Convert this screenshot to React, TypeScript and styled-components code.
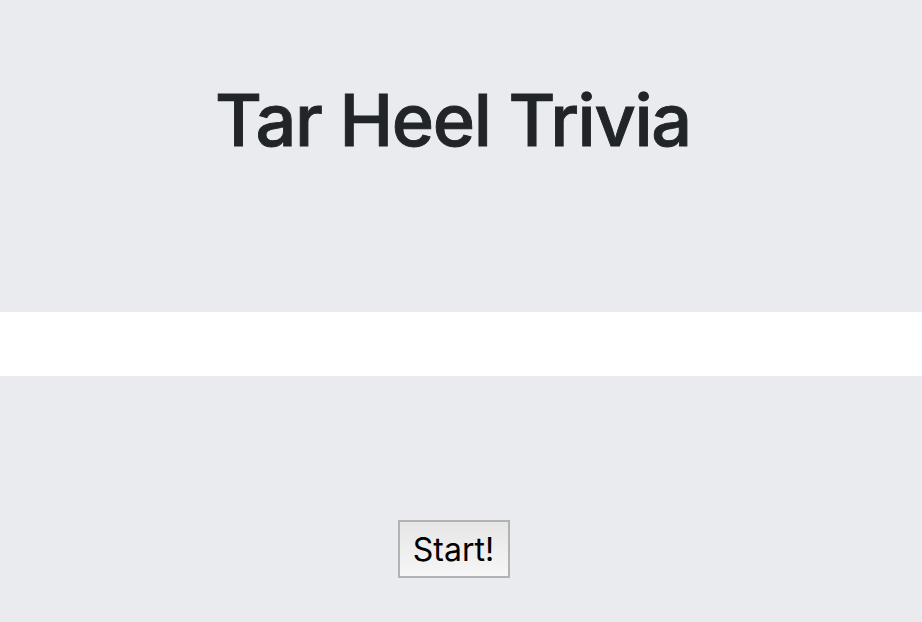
import React from "react";
import styled, { createGlobalStyle } from "styled-components";

const Global = createGlobalStyle`
  html, body { margin: 0; padding: 0; background: #e9ebef; }
  body { font-family: Inter, "Liberation Sans", sans-serif; }
`;

const Page = styled.div`
  display: flex;
  flex-direction: column;
  min-height: 622px;
  background: #e9ebef;
`;

const Header = styled.header`
  height: 312px;
  box-sizing: border-box;
  display: flex;
  justify-content: center;
  padding: 72px 16px 0 0;
  background: #e9ebef;
`;

const Title = styled.h1`
  margin: 0;
  font-family: Inter, "Liberation Sans", sans-serif;
  font-weight: 500;
  font-size: 72px;
  line-height: 96px;
  letter-spacing: -1.3px;
  color: #212529;
  -webkit-text-stroke: 0.9px #212529;
`;

const Divider = styled.div`
  height: 64px;
  background: #ffffff;
`;

const Body = styled.main`
  flex: 1;
  display: flex;
  justify-content: center;
  align-items: flex-start;
  padding: 144px 15px 0 0;
  background: #e9ebef;
`;

const StartButton = styled.button`
  width: 112px;
  height: 58px;
  box-sizing: border-box;
  border: 2px solid #b3b3b3;
  border-radius: 0;
  background: linear-gradient(#e6e6e6, #f6f6f6);
  font-family: Inter, "Liberation Sans", sans-serif;
  font-size: 32px;
  color: #000;
  padding: 0;
  cursor: pointer;
`;

export default function App() {
  return (
    <Page>
      <Global />
      <Header>
        <Title>Tar Heel Trivia</Title>
      </Header>
      <Divider />
      <Body>
        <StartButton>Start!</StartButton>
      </Body>
    </Page>
  );
}
